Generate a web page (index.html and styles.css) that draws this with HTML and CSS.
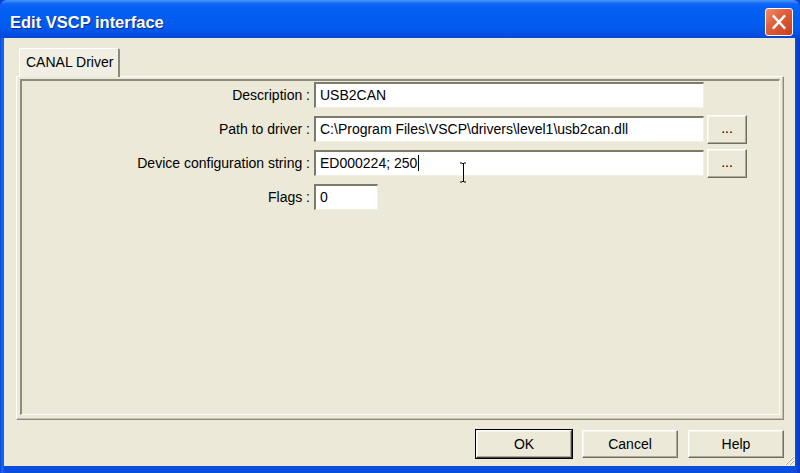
FILE: index.html
```html
<!DOCTYPE html>
<html lang="en">
<head>
    <meta charset="UTF-8">
    <title>Edit VSCP interface</title>
    <link rel="stylesheet" href="styles.css">
</head>
<body>
    <div class="window">
        <div class="titlebar">
            <span class="title">Edit VSCP interface</span>
            <div class="close">
                <svg viewBox="0 0 27 28" width="27" height="28">
                    <path d="M8 8L19 20M19 8L8 20" stroke="#fff" stroke-width="2.6" stroke-linecap="square"></path>
                </svg>
            </div>
        </div>

        <div class="client">
            <div class="tabs">
                <div class="tab">CANAL Driver</div>
            </div>
            <div class="panel">
                <div class="panel-inner">
                    <div class="row">
                        <label>Description :</label>
                        <div class="field wide">USB2CAN</div>
                    </div>
                    <div class="row">
                        <label>Path to driver :</label>
                        <div class="field wide">C:\Program Files\VSCP\drivers\level1\usb2can.dll</div>
                        <button class="btn small">...</button>
                    </div>
                    <div class="row">
                        <label>Device configuration string :</label>
                        <div class="field wide">ED000224; 250<span class="caret"></span></div>
                        <button class="btn small">...</button>
                    </div>
                    <div class="row">
                        <label>Flags :</label>
                        <div class="field narrow">0</div>
                    </div>
                </div>
            </div>

            <div class="actions">
                <button class="btn default">OK</button>
                <button class="btn">Cancel</button>
                <button class="btn">Help</button>
            </div>
        </div>

        <!-- mouse cursor over the config field -->
        <svg class="ibeam" viewBox="0 0 9 21" width="9" height="21">
            <path d="M1 1h2l1 1 1-1h2M4.5 2v17M1 20h2l1-1 1 1h2" stroke="#000" stroke-width="1" fill="none"></path>
        </svg>

        <svg class="grip" viewBox="0 0 12 12" width="12" height="12">
            <path d="M11 2L2 11M11 6L6 11M11 10L10 11" stroke="#fff" stroke-width="1"></path>
            <path d="M11 3L3 11M11 7L7 11" stroke="#aca899" stroke-width="1"></path>
        </svg>
    </div>
</body>
</html>
```

FILE: styles.css
```css
* {
    margin: 0;
    padding: 0;
    box-sizing: border-box;
}

body {
    width: 800px;
    height: 473px;
    overflow: hidden;
    font-family: "Liberation Sans", Arial, sans-serif;
    font-size: 14px;
    color: #000;
    background: #0842d4;
}

.window {
    position: relative;
    width: 800px;
    height: 473px;
    display: flex;
    flex-direction: column;
    background: linear-gradient(to right, #0843d6 0, #166df5 2px, #0a4ee0 5px, #0a4ee0 795px, #0637c4 800px);
    border-radius: 7px 7px 0 0;
    overflow: hidden;
}

.titlebar {
    height: 38px;
    flex: none;
    display: flex;
    align-items: center;
    justify-content: space-between;
    padding: 0 7px 0 10px;
    background: linear-gradient(to bottom, #4a98fb 0, #0d64f4 4px, #005ff2 12px, #035aee 28px, #014cdc 36px, #0a46d0 38px);
}

.title {
    color: #fff;
    font-weight: bold;
    font-size: 16.5px;
    padding-top: 7px;
    text-shadow: 1px 1px 0 #0a2a8c;
}

.close {
    width: 28px;
    height: 28px;
    margin-top: 5px;
    border: 1px solid #fff;
    border-radius: 3px;
    background: linear-gradient(135deg, #f08c6c 0, #e0603c 40%, #c8401e 100%);
    display: flex;
    align-items: center;
    justify-content: center;
}

.close svg {
    display: block;
}

.client {
    flex: 1;
    margin: 0 5px 7px 4px;
    background: #ece9d8;
    display: flex;
    flex-direction: column;
    padding: 10px 11px 0 12px;
}

.tabs {
    display: flex;
    padding-left: 3px;
    height: 28px;
}

.tab {
    width: 101px;
    height: 29px;
    padding: 5px 0 0 6px;
    background: #f1efe3;
    border: 1px solid #fff;
    border-right: 2px solid #8c8a7d;
    border-bottom: none;
    border-radius: 2px 2px 0 0;
    position: relative;
    z-index: 1;
}

.panel {
    height: 344px;
    border: 1px solid;
    border-color: #fff #8c8a7d #8c8a7d #fff;
    box-shadow: inset -1px -1px 0 #c5c2b2;
    padding: 2px 3px 4px 3px;
}

.panel-inner {
    height: 100%;
    border-top: 2px solid #8f8c7c;
    border-left: 2px solid #8f8c7c;
    border-bottom: 1px solid #fbfaf5;
    border-right: 1px solid #fbfaf5;
    padding-top: 1px;
    display: flex;
    flex-direction: column;
    gap: 8px;
}

.row {
    display: flex;
    align-items: center;
    height: 26px;
}

.row label {
    width: 292px;
    padding-right: 4px;
    text-align: right;
    flex: none;
}

.field {
    height: 26px;
    background: #fff;
    border-top: 2px solid #7d7a6a;
    border-left: 2px solid #7d7a6a;
    border-bottom: 1px solid #f1efe2;
    border-right: 1px solid #f1efe2;
    padding: 3px 0 0 4px;
    white-space: nowrap;
    overflow: hidden;
}

.field.wide {
    width: 390px;
}

.field.narrow {
    width: 64px;
}

.caret {
    display: inline-block;
    width: 1px;
    height: 16px;
    background: #000;
    vertical-align: -3px;
    margin-left: 1px;
}

.btn {
    font-family: "Liberation Sans", Arial, sans-serif;
    font-size: 14px;
    color: #000;
    width: 96px;
    height: 28px;
    background: #ece9d8;
    border: 1px solid;
    border-color: #fff #716f64 #716f64 #fff;
    box-shadow: inset -1px -1px 0 #aca899, inset 1px 1px 0 #f5f4ee;
}

.btn.small {
    width: 40px;
    height: 29px;
    margin-left: 3px;
    padding-bottom: 2px;
}

.btn.default {
    outline: 1px solid #000;
    outline-offset: 0;
    border-color: #fff #404040 #404040 #fff;
}

.actions {
    display: flex;
    justify-content: flex-end;
    gap: 10px;
    margin-top: 10px;
}

.ibeam {
    position: absolute;
    left: 459px;
    top: 162px;
}

.grip {
    position: absolute;
    left: 783px;
    top: 454px;
}
```
